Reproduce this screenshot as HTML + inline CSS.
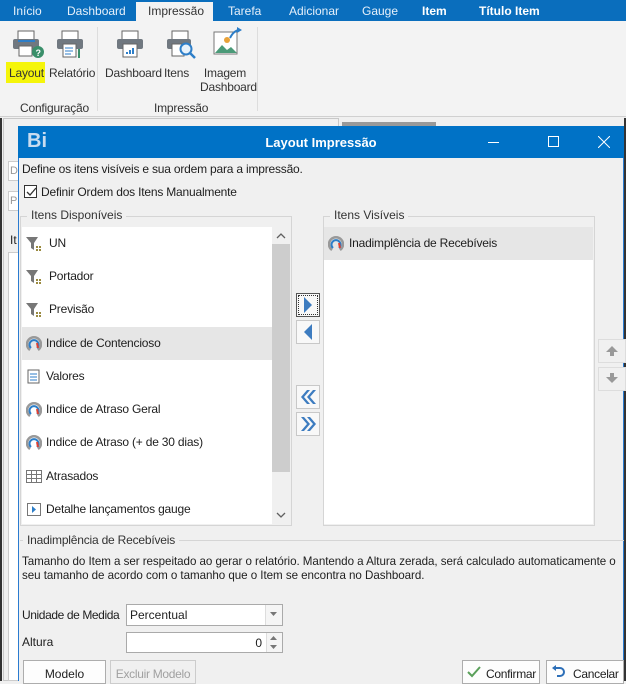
<!DOCTYPE html>
<html><head><meta charset="utf-8">
<style>
*{box-sizing:border-box;margin:0;padding:0}
body{width:626px;height:681px;overflow:hidden;background:#f0f0f0;font-family:"Liberation Sans",sans-serif;font-size:12px;color:#1e1e1e;position:relative}
.a{position:absolute}
.tabs{left:0;top:0;width:626px;height:21px;background:#0a6ebd}
.tab{position:absolute;top:4px;color:#e6f0fa;font-size:12px}
.rib{left:0;top:21px;width:626px;height:96px;background:#f3f3f3;border-bottom:1px solid #d0d0d0}
.lbl{position:absolute;font-size:12px;color:#333;text-align:center;letter-spacing:-0.2px}
.dlg{left:18px;top:126px;width:606px;height:555px;background:#f0f0f0;border-left:1px solid #2a7bd0;border-right:1px solid #2a7bd0}
.title{left:18px;top:126px;width:606px;height:32px;background:#0072c6;color:#fff}
.fs{position:absolute;border:1px solid #d5d5d5}
.leg{position:absolute;background:#f0f0f0;padding:0 4px;color:#333}
.row{position:absolute;left:0;height:33px;width:250px;line-height:33px}
.row span{position:absolute;left:26px}
.row svg{position:absolute;left:4px;top:9px}
.btn{position:absolute;background:#fdfdfd;border:1px solid #adadad}
.sbtn{position:absolute;width:24px;height:24px;background:#f8f8f8;border:1px solid #c8c8c8}
</style></head><body>
<div class="a tabs">
 <div class="tab" style="left:13px">Início</div>
 <div class="tab" style="left:67px">Dashboard</div>
 <div class="a" style="left:136px;top:2px;width:77px;height:20px;background:#f3f3f3"></div>
 <div class="tab" style="left:148px;color:#333">Impressão</div>
 <div class="tab" style="left:228px">Tarefa</div>
 <div class="tab" style="left:289px">Adicionar</div>
 <div class="tab" style="left:362px">Gauge</div>
 <div class="tab" style="left:422px;font-weight:bold;color:#fff">Item</div>
 <div class="tab" style="left:479px;font-weight:bold;color:#fff">Título Item</div>
</div>
<div class="a rib">
 <svg class="a" style="left:10px;top:8px" width="36" height="30" viewBox="0 0 36 30"><rect x="8" y="2" width="16" height="9" fill="#fff" stroke="#666"/><rect x="3" y="10" width="26" height="10" rx="2" fill="#707880"/><rect x="9" y="17" width="13" height="10" fill="#fff" stroke="#666"/><path d="M8 12h17" stroke="#2d7ec8" stroke-width="2"/><circle cx="28" cy="23" r="6" fill="#3a8f6a"/><text x="25.5" y="27" font-size="9" fill="#fff" font-family="Liberation Sans" font-weight="bold">?</text></svg>
 <svg class="a" style="left:52px;top:8px" width="36" height="30" viewBox="0 0 36 30"><rect x="10" y="2" width="16" height="9" fill="#fff" stroke="#666"/><rect x="5" y="10" width="26" height="10" rx="2" fill="#707880"/><rect x="11" y="15" width="13" height="13" fill="#fff" stroke="#666"/><path d="M13 19h8M13 22h8M13 25h6" stroke="#2d7ec8"/><path d="M27 20v9" stroke="#3a8f6a" stroke-width="2"/></svg>
 <svg class="a" style="left:112px;top:8px" width="36" height="30" viewBox="0 0 36 30"><rect x="10" y="2" width="16" height="9" fill="#fff" stroke="#666"/><rect x="5" y="10" width="26" height="10" rx="2" fill="#707880"/><rect x="11" y="15" width="14" height="13" fill="#fff" stroke="#666"/><path d="M15 25v-2M18 25v-4M21 25v-6" stroke="#2d7ec8" stroke-width="2"/></svg>
 <svg class="a" style="left:164px;top:8px" width="36" height="32" viewBox="0 0 36 32"><rect x="8" y="2" width="16" height="9" fill="#fff" stroke="#666"/><rect x="3" y="10" width="24" height="10" rx="2" fill="#707880"/><rect x="8" y="15" width="12" height="12" fill="#fff" stroke="#666"/><circle cx="22" cy="20" r="5.5" fill="#e8f2fb" stroke="#2d7ec8" stroke-width="2"/><path d="M26 24l5 5" stroke="#2d7ec8" stroke-width="2.5"/></svg>
 <svg class="a" style="left:210px;top:5px" width="36" height="32" viewBox="0 0 36 32"><rect x="4" y="6" width="23" height="22" fill="#fff" stroke="#777"/><path d="M5 27l7-8 5 5 4-3 6 6z" fill="#4a9a78"/><circle cx="17" cy="14" r="3" fill="#e8a23a"/><path d="M20 12q4-8 10-8" stroke="#2d7ec8" stroke-width="2" fill="none"/><path d="M27 1l5 3-5 3z" fill="#2d7ec8"/></svg>
 <div class="a" style="left:6px;top:41px;width:39px;height:21px;background:#f5f50a"></div>
 <div class="lbl" style="left:9px;top:45px">Layout</div>
 <div class="lbl" style="left:49px;top:45px">Relatório</div>
 <div class="lbl" style="left:105px;top:45px">Dashboard</div>
 <div class="lbl" style="left:164px;top:45px">Itens</div>
 <div class="lbl" style="left:200px;top:45px;line-height:14px;width:50px">Imagem<br>Dashboard</div>
 <div class="lbl" style="left:20px;top:80px">Configuração</div>
 <div class="lbl" style="left:154px;top:80px">Impressão</div>
 <div class="a" style="left:97px;top:6px;width:1px;height:84px;background:#ddd"></div>
 <div class="a" style="left:257px;top:6px;width:1px;height:84px;background:#ddd"></div>
</div>
<div class="a" style="left:0;top:118px;width:2px;height:563px;background:#333"></div>
<div class="a" style="left:3px;top:118px;width:336px;height:563px;border:1px solid #c8c8c8;background:#f0f0f0"></div>
<div class="a" style="left:342px;top:122px;width:94px;height:4px;background:#999"></div>
<div class="a" style="left:8px;top:161px;width:12px;height:20px;border:1px solid #ccc;background:#fff;color:#999;font-size:11px;padding:3px 1px">D</div>
<div class="a" style="left:8px;top:191px;width:12px;height:20px;border:1px solid #ccc;background:#fff;color:#999;font-size:11px;padding:3px 1px">P</div>
<div class="a" style="left:10px;top:233px">It</div>
<div class="a" style="left:8px;top:252px;width:12px;height:429px;border:1px solid #ccc;background:#fff"></div>
<div class="a" style="left:624px;top:118px;width:2px;height:563px;background:#333"></div>

<div class="a dlg"></div>
<div class="a title">
 <div class="a" style="left:9px;top:4px;font-size:20px;font-weight:bold;color:#c8dcf0">Bi</div>
 <div class="a" style="left:0;width:606px;top:9px;text-align:center;font-weight:bold;font-size:13px">Layout Impressão</div>
 <div class="a" style="left:470px;top:16px;width:11px;height:1px;background:#fff"></div>
 <div class="a" style="left:530px;top:10px;width:11px;height:11px;border:1px solid #fff"></div>
 <svg class="a" style="left:580px;top:10px" width="12" height="12"><path d="M0 0L12 12M12 0L0 12" stroke="#fff"/></svg>
</div>
<div class="a" style="left:22px;top:162px;letter-spacing:-0.2px">Define os itens visíveis e sua ordem para a impressão.</div>
<div class="a" style="left:24px;top:185px;width:13px;height:13px;border:1px solid #333;background:#fff"></div>
<svg class="a" style="left:25px;top:186px" width="12" height="12"><path d="M2 6l3 3 6-7" stroke="#333" fill="none" stroke-width="1.3"/></svg>
<div class="a" style="left:41px;top:185px;letter-spacing:-0.2px">Definir Ordem dos Itens Manualmente</div>

<div class="fs" style="left:20px;top:216px;width:272px;height:310px"></div>
<div class="leg" style="left:27px;top:208px">Itens Disponíveis</div>
<div class="a" style="left:22px;top:227px;width:250px;height:297px;background:#fff;overflow:hidden;letter-spacing:-0.2px">
 <div class="row" style="top:0"><svg width="18" height="16"><path d="M0 1h12l-4 6v7l-3-2v-5z" fill="#777"/><rect x="10" y="10" width="2" height="2" fill="#9a8a40"/><rect x="13" y="10" width="2" height="2" fill="#9a8a40"/><rect x="10" y="13" width="2" height="2" fill="#9a8a40"/><rect x="13" y="13" width="2" height="2" fill="#9a8a40"/></svg><span style="left:27px">UN</span></div>
 <div class="row" style="top:33px"><svg width="18" height="16"><path d="M0 1h12l-4 6v7l-3-2v-5z" fill="#777"/><rect x="10" y="10" width="2" height="2" fill="#9a8a40"/><rect x="13" y="10" width="2" height="2" fill="#9a8a40"/><rect x="10" y="13" width="2" height="2" fill="#9a8a40"/><rect x="13" y="13" width="2" height="2" fill="#9a8a40"/></svg><span style="left:27px">Portador</span></div>
 <div class="row" style="top:66px"><svg width="18" height="16"><path d="M0 1h12l-4 6v7l-3-2v-5z" fill="#777"/><rect x="10" y="10" width="2" height="2" fill="#9a8a40"/><rect x="13" y="10" width="2" height="2" fill="#9a8a40"/><rect x="10" y="13" width="2" height="2" fill="#9a8a40"/><rect x="13" y="13" width="2" height="2" fill="#9a8a40"/></svg><span style="left:27px">Previsão</span></div>
 <div class="row" style="top:100px;background:#e6e6e6"><svg width="16" height="16"><path d="M4 14a7 7 0 1 1 8 0" stroke="#999" stroke-width="2.5" fill="none"/><path d="M5 12a4.5 4.5 0 1 1 6 0" stroke="#2d7ec8" stroke-width="2" fill="none"/><path d="M11 7l1 5" stroke="#e04030" stroke-width="2"/></svg><span style="left:24px">Indice de Contencioso</span></div>
 <div class="row" style="top:133px"><svg width="16" height="16"><rect x="2" y="1" width="11" height="13" fill="#fff" stroke="#666"/><path d="M4 5h7M4 8h7M4 11h7" stroke="#2d7ec8"/></svg><span style="left:24px">Valores</span></div>
 <div class="row" style="top:166px"><svg width="16" height="16"><path d="M4 14a7 7 0 1 1 8 0" stroke="#999" stroke-width="2.5" fill="none"/><path d="M5 12a4.5 4.5 0 1 1 6 0" stroke="#2d7ec8" stroke-width="2" fill="none"/><path d="M11 7l1 5" stroke="#e04030" stroke-width="2"/></svg><span style="left:24px">Indice de Atraso Geral</span></div>
 <div class="row" style="top:199px"><svg width="16" height="16"><path d="M4 14a7 7 0 1 1 8 0" stroke="#999" stroke-width="2.5" fill="none"/><path d="M5 12a4.5 4.5 0 1 1 6 0" stroke="#2d7ec8" stroke-width="2" fill="none"/><path d="M11 7l1 5" stroke="#e04030" stroke-width="2"/></svg><span style="left:24px">Indice de Atraso (+ de 30 dias)</span></div>
 <div class="row" style="top:233px"><svg width="17" height="16"><rect x="0.5" y="1.5" width="15" height="12" fill="#fff" stroke="#777"/><path d="M0 5.5h16M0 9.5h16M5.5 1v13M10.5 1v13" stroke="#777"/></svg><span style="left:24px">Atrasados</span></div>
 <div class="row" style="top:266px"><svg width="16" height="16"><rect x="1.5" y="1.5" width="13" height="12" fill="#fff" stroke="#777"/><path d="M6 4l4 3.5-4 3.5z" fill="#2d7ec8"/></svg><span style="left:24px">Detalhe lançamentos gauge</span></div>
</div>
<div class="a" style="left:272px;top:227px;width:18px;height:297px;background:#f0f0f0"></div>
<div class="a" style="left:272px;top:244px;width:18px;height:228px;background:#cdcdcd"></div>
<svg class="a" style="left:276px;top:232px" width="10" height="8"><path d="M1 6l4-4 4 4" stroke="#606060" fill="none" stroke-width="1.3"/></svg>
<svg class="a" style="left:276px;top:511px" width="10" height="8"><path d="M1 2l4 4 4-4" stroke="#606060" fill="none" stroke-width="1.3"/></svg>

<div class="sbtn" style="left:296px;top:293px;border:1px solid #555;outline:1px dotted #333;outline-offset:-3px"></div>
<svg class="a" style="left:302px;top:296px" width="12" height="18"><path d="M2 1l8 8-8 8z" fill="#3d7cc0"/></svg>
<div class="sbtn" style="left:296px;top:320px"></div>
<svg class="a" style="left:302px;top:323px" width="12" height="18"><path d="M10 1l-8 8 8 8z" fill="#3d7cc0"/></svg>
<div class="sbtn" style="left:296px;top:385px"></div>
<svg class="a" style="left:299px;top:389px" width="18" height="16"><path d="M8 1L2 8l6 7h3L5 8l6-7zM14 1L8 8l6 7h3l-6-7 6-7z" fill="#3d7cc0"/></svg>
<div class="sbtn" style="left:296px;top:412px"></div>
<svg class="a" style="left:299px;top:416px" width="18" height="16"><path d="M2 1l6 7-6 7h3l6-7-6-7zM8 1l6 7-6 7h3l6-7-6-7z" fill="#3d7cc0"/></svg>

<div class="fs" style="left:323px;top:216px;width:272px;height:310px"></div>
<div class="leg" style="left:330px;top:208px">Itens Visíveis</div>
<div class="a" style="left:324px;top:227px;width:269px;height:297px;background:#fff;letter-spacing:-0.2px">
 <div class="row" style="top:0;width:269px;background:#e6e6e6"><svg width="16" height="16"><path d="M4 14a7 7 0 1 1 8 0" stroke="#999" stroke-width="2.5" fill="none"/><path d="M5 12a4.5 4.5 0 1 1 6 0" stroke="#2d7ec8" stroke-width="2" fill="none"/><path d="M11 7l1 5" stroke="#e04030" stroke-width="2"/></svg><span style="left:25px">Inadimplência de Recebíveis</span></div>
</div>
<div class="sbtn" style="left:598px;top:339px;width:28px;background:#f0f0f0;border-color:#ddd"></div>
<svg class="a" style="left:605px;top:345px" width="14" height="12"><path d="M7 1l6 6H9v4H5V7H1z" fill="#999"/></svg>
<div class="sbtn" style="left:598px;top:367px;width:28px;background:#f0f0f0;border-color:#ddd"></div>
<svg class="a" style="left:605px;top:372px" width="14" height="12"><path d="M7 11l6-6H9V1H5v4H1z" fill="#999"/></svg>

<div class="a" style="left:20px;top:540px;width:604px;height:1px;background:#d5d5d5"></div>
<div class="leg" style="left:23px;top:533px;letter-spacing:-0.2px">Inadimplência de Recebíveis</div>
<div class="a" style="left:22px;top:555px;width:602px;line-height:14px;font-size:11.6px;letter-spacing:-0.05px;white-space:nowrap">Tamanho do Item a ser respeitado ao gerar o relatório. Mantendo a Altura zerada, será calculado automaticamente o<br>seu tamanho de acordo com o tamanho que o Item se encontra no Dashboard.</div>
<div class="a" style="left:22px;top:608px;letter-spacing:-0.4px">Unidade de Medida</div>
<div class="a" style="left:126px;top:604px;width:157px;height:22px;background:#fff;border:1px solid #aaa;padding:3px 3px">Percentual</div>
<div class="a" style="left:265px;top:605px;width:17px;height:20px;background:#f5f5f5;border-left:1px solid #ddd"></div>
<svg class="a" style="left:270px;top:612px" width="8" height="5"><path d="M0 0h7L3.5 4z" fill="#777"/></svg>
<div class="a" style="left:22px;top:635px">Altura</div>
<div class="a" style="left:126px;top:632px;width:157px;height:21px;background:#fff;border:1px solid #aaa;padding:3px 20px 0 0;text-align:right">0</div>
<div class="a" style="left:266px;top:633px;width:16px;height:19px;background:#f5f5f5;border-left:1px solid #ddd"></div>
<svg class="a" style="left:270px;top:635px" width="8" height="16"><path d="M0 5h7L3.5 1zM0 10h7l-3.5 4z" fill="#777"/></svg>

<div class="btn" style="left:23px;top:660px;width:83px;height:24px;text-align:center;padding-top:6px">Modelo</div>
<div class="btn" style="left:110px;top:660px;width:86px;height:24px;text-align:center;padding-top:6px;color:#a0a0a0;background:#f0f0f0;border-color:#ccc;letter-spacing:-0.3px">Excluir Modelo</div>
<div class="btn" style="left:462px;top:660px;width:78px;height:24px;padding:6px 0 0 23px;letter-spacing:-0.3px">Confirmar</div>
<svg class="a" style="left:467px;top:666px" width="14" height="12"><path d="M1 6l4 4 8-9" stroke="#5aa05a" stroke-width="2" fill="none"/></svg>
<div class="btn" style="left:546px;top:660px;width:78px;height:24px;padding:6px 0 0 26px;letter-spacing:-0.3px">Cancelar</div>
<svg class="a" style="left:551px;top:665px" width="14" height="12"><path d="M4 3h5a4 4 0 0 1 0 8H6" stroke="#2d6fb8" stroke-width="2" fill="none"/><path d="M1 3l4-3v6z" fill="#2d6fb8"/></svg>
</body></html>
